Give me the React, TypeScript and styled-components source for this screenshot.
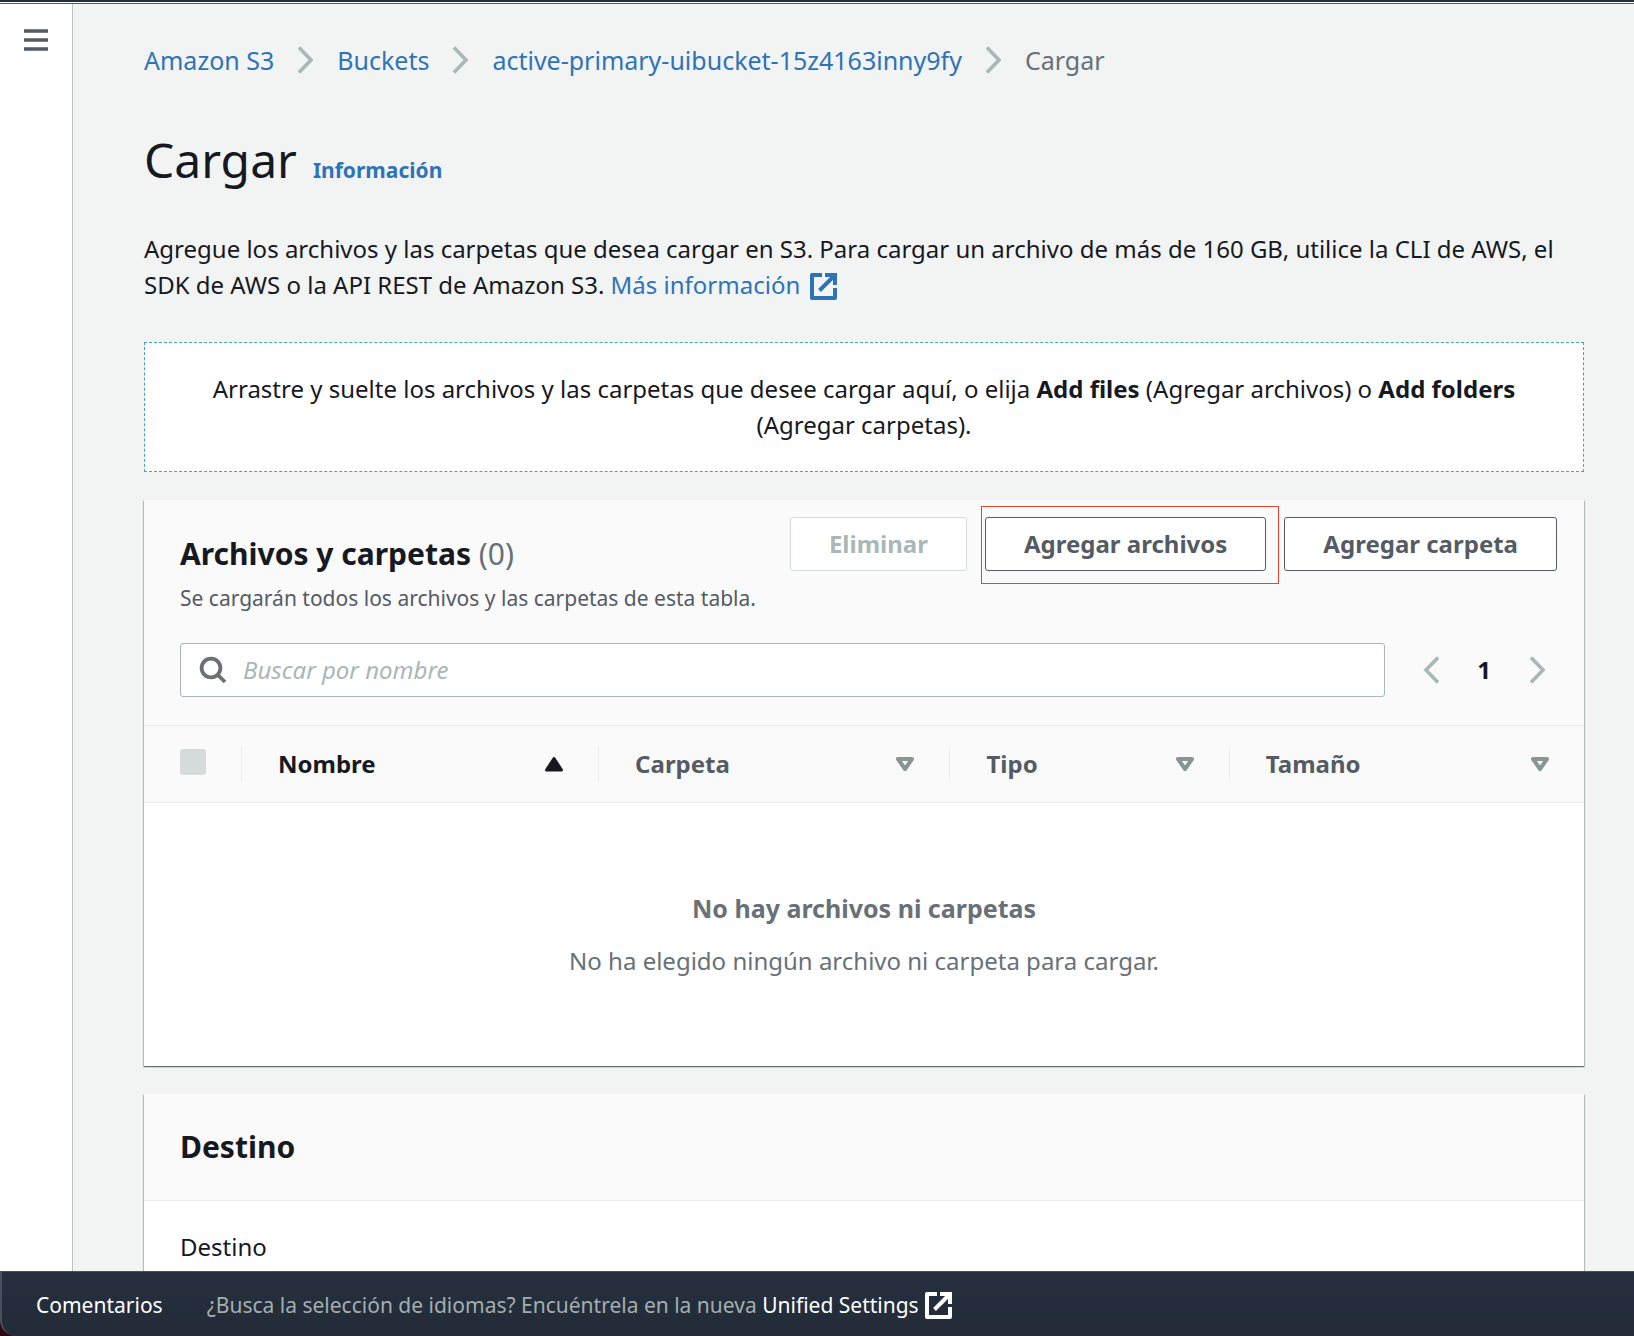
import React, { useState } from "react";
import styled, { createGlobalStyle, css } from "styled-components";

const color = {
  ink: "#16191f",
  slate: "#545b64",
  grey: "#687078",
  muted: "#aab7b8",
  sortIdle: "#879596",
  line: "#eaeded",
  link: "#2e73b8",
  page: "#f2f3f3",
  header: "#fafafa",
  navy: "#232f3e",
  alert: "#e8432e",
};

const GlobalStyle = createGlobalStyle`
  *, *::before, *::after { box-sizing: border-box; }
  body {
    margin: 0;
    background: ${color.page};
    color: ${color.ink};
    font-family: "Noto Sans", "Open Sans", sans-serif;
    font-size: 24px;
    line-height: 36px;
  }
  h1, h2, p, ol { margin: 0; padding: 0; }
  button, input { font: inherit; color: inherit; }
`;

const Shell = styled.div`
  display: flex;
  flex-direction: column;
  height: 100vh;
  background: #2a0a10;
`;

const TopEdge = styled.div`
  flex: none;
  height: 4px;
  background: linear-gradient(${color.navy} 0 2px, #ffffff 2px 3px, ${color.slate} 3px 4px);
`;

const Body = styled.div`
  display: flex;
  flex: 1;
  min-height: 0;
  background: ${color.page};
`;

const SideRail = styled.nav`
  flex: none;
  width: 73px;
  padding: 16px 16px;
  background: #ffffff;
  border-right: 1px solid #b9c2c4;
`;

const IconButton = styled.button`
  display: flex;
  align-items: center;
  justify-content: center;
  width: 40px;
  height: 40px;
  padding: 0;
  border: 0;
  background: none;
  color: ${color.slate};
  &:disabled { color: ${color.muted}; }
`;

const Main = styled.main`
  flex: 1;
  min-width: 0;
  padding: 38px 50px 0 71px;
  overflow-y: auto;
  scrollbar-width: none;
`;

const Crumbs = styled.ol`
  display: flex;
  flex-wrap: wrap;
  list-style: none;
  font-size: 25px;
`;

const Crumb = styled.li`
  display: flex;
  align-items: center;
  color: ${color.grey};
  & > svg { margin: 0 23px; color: ${color.muted}; }
`;

const Link = styled.a`
  color: ${color.link};
  text-decoration: none;
`;

const TitleRow = styled.div`
  display: flex;
  align-items: baseline;
  gap: 16px;
  margin-top: 48px;
`;

const Title = styled.h1`
  font-size: 48px;
  line-height: 68px;
  font-weight: 400;
`;

const InfoLink = styled(Link)`
  font-size: 21px;
  font-weight: 700;
`;

const Intro = styled.p`
  margin-top: 37px !important;
  & svg { margin-left: 10px; vertical-align: -6px; }
`;

const DropZone = styled.p`
  margin-top: 39px !important;
  padding: 28px 48px !important;
  background: #ffffff;
  border: 1px dashed #3ea3c4;
  text-align: center;
`;

const Card = styled.section`
  margin-top: 28px;
  background: #ffffff;
  box-shadow: 0 1px 1px 0 rgba(0, 28, 36, 0.4), 1px 1px 1px 0 rgba(0, 28, 36, 0.2),
    -1px 1px 1px 0 rgba(0, 28, 36, 0.2);
`;

const CardHeader = styled.header`
  padding: 17px 27px 28px 36px;
  background: ${color.header};
  border-bottom: 1px solid ${color.line};
`;

const HeaderTop = styled.div`
  display: flex;
  justify-content: space-between;
`;

const HeaderText = styled.div`
  padding-top: 17px;
`;

const CardTitle = styled.h2`
  font-size: 30px;
  line-height: 40px;
  font-weight: 700;
`;

const Count = styled.span`
  color: ${color.grey};
  font-weight: 400;
`;

const Description = styled.p`
  margin-top: 8px !important;
  font-size: 21px;
  line-height: 32px;
  color: ${color.slate};
`;

const Actions = styled.div`
  display: flex;
  align-items: flex-start;
  gap: 18px;
`;

const Button = styled.button`
  height: 54px;
  padding: 0 38px;
  background: #ffffff;
  border: 1px solid ${color.slate};
  border-radius: 3px;
  color: ${color.slate};
  font-weight: 700;
  white-space: nowrap;
  &:disabled {
    border-color: #d5dbdb;
    color: ${color.muted};
  }
`;

const Highlight = styled.span`
  position: relative;
  display: flex;
  &::after {
    content: "";
    position: absolute;
    inset: -11px -13px -13px -4px;
    border: 1px solid ${color.alert};
    pointer-events: none;
  }
`;

const Tools = styled.div`
  display: flex;
  align-items: center;
  gap: 26px;
  margin-top: 29px;
`;

const SearchBox = styled.label`
  display: flex;
  flex: 1;
  align-items: center;
  gap: 16px;
  height: 54px;
  padding: 0 18px;
  background: #ffffff;
  border: 1px solid ${color.muted};
  border-radius: 3px;
  color: ${color.grey};
  & > svg { flex: none; }
`;

const SearchInput = styled.input`
  flex: 1;
  min-width: 0;
  padding: 0;
  border: 0;
  outline: 0;
  background: none;
  color: ${color.ink};
  &::placeholder { color: ${color.muted}; font-style: italic; opacity: 1; }
`;

const Pager = styled.nav`
  display: flex;
  align-items: center;
  gap: 14px;
`;

const PageNumber = styled.button`
  width: 38px;
  padding: 0;
  border: 0;
  background: none;
  color: ${color.ink};
  font-weight: 700;
`;

const Table = styled.table`
  width: 100%;
  border-collapse: collapse;
  table-layout: fixed;
`;

const HeadCell = styled.th<{ $width?: string }>`
  width: ${(p) => p.$width ?? "auto"};
  height: 76px;
  padding: 0;
  background: ${color.header};
  border-bottom: 1px solid ${color.line};
  text-align: left;
`;

const HeadInner = styled.div<{ $divider?: boolean }>`
  display: flex;
  align-items: center;
  height: 38px;
  padding: 0 34px 0 36px;
  ${(p) => p.$divider && css`border-right: 1px solid ${color.line};`}
`;

const SortButton = styled.button<{ $active: boolean }>`
  display: flex;
  flex: 1;
  align-items: center;
  justify-content: space-between;
  padding: 0;
  border: 0;
  background: none;
  color: ${(p) => (p.$active ? color.ink : color.slate)};
  font-weight: 700;
  & > svg { flex: none; color: ${(p) => (p.$active ? color.ink : color.sortIdle)}; }
`;

const Check = styled.input`
  appearance: none;
  flex: none;
  width: 26px;
  height: 26px;
  margin: 0 0 4px;
  background: #d5dbdb;
  border-radius: 3px;
`;

const EmptyCell = styled.td`
  height: 264px;
  padding: 0;
  color: ${color.grey};
  text-align: center;
`;

const EmptyTitle = styled.p`
  margin-bottom: 17px !important;
  font-size: 25px;
  font-weight: 700;
`;

const PlainHeader = styled(CardHeader)`
  padding: 33px 36px;
`;

const CardBody = styled.div`
  padding: 28px 36px 60px;
`;

const Footer = styled.footer`
  display: flex;
  flex: none;
  align-items: center;
  gap: 44px;
  height: 65px;
  padding: 2px 34px 0;
  background: linear-gradient(#262f40, #222b36);
  border-top: 1px solid #4a515e;
  border-left: 2px solid #4a515e;
  border-bottom-left-radius: 16px;
  color: #a3aeae;
  font-size: 21px;
`;

const FooterLink = styled.a`
  color: #ffffff;
  text-decoration: none;
  & > svg { margin-left: 6px; vertical-align: -6px; }
`;

const MenuIcon = () => (
  <svg width="24" height="24" viewBox="0 0 24 24" stroke="currentColor" strokeWidth="3.600" aria-hidden="true">
    <path d="M0 3h24M0 12h24M0 21h24" />
  </svg>
);

const Chevron = ({ left = false }: { left?: boolean }) => (
  <svg width="17" height="28" viewBox="0 0 17 28" fill="none" stroke="currentColor" strokeWidth="3.600" aria-hidden="true">
    <path d={left ? "M15 1.500 3 14l12 12.500" : "M2 1.500 14 14 2 26.500"} />
  </svg>
);

const ExternalIcon = () => (
  <svg width="27" height="27" viewBox="0 0 27 27" fill="none" stroke="currentColor" strokeWidth="4" aria-hidden="true">
    <path d="M12 2H2v23h23V15" strokeLinejoin="round" />
    <path d="M15 2h10v10M25 2 9.500 17.500" />
  </svg>
);

const SearchIcon = () => (
  <svg width="28" height="28" viewBox="0 0 28 28" fill="none" stroke="currentColor" strokeWidth="3.800" aria-hidden="true">
    <circle cx="12" cy="12" r="9.400" />
    <path d="m18.500 18.500 7.500 7.500" />
  </svg>
);

const SortIcon = ({ active }: { active: boolean }) => (
  <svg width="20" height="16" viewBox="0 0 20 16" stroke="currentColor" strokeLinejoin="round" aria-hidden="true">
    {active ? (
      <path d="M10 2.500 17.500 14h-15z" fill="currentColor" strokeWidth="3" />
    ) : (
      <path d="M3 3h14l-7 10z" fill="none" strokeWidth="4" />
    )}
  </svg>
);

const trail = ["Amazon S3", "Buckets", "active-primary-uibucket-15z4163inny9fy"];

const columns = [
  { name: "Nombre", width: "24.800%" },
  { name: "Carpeta", width: "24.400%" },
  { name: "Tipo", width: "19.400%" },
  { name: "Tamaño", width: undefined },
];

export default function App() {
  const [sorted, setSorted] = useState("Nombre");
  const [query, setQuery] = useState("");

  return (
    <>
      <GlobalStyle />
      <Shell>
        <TopEdge />
        <Body>
          <SideRail>
            <IconButton aria-label="Abrir navegación"><MenuIcon /></IconButton>
          </SideRail>
          <Main>
            <nav aria-label="Ruta">
              <Crumbs>
                {trail.map((item) => (
                  <Crumb key={item}><Link href="#">{item}</Link><Chevron /></Crumb>
                ))}
                <Crumb aria-current="page">Cargar</Crumb>
              </Crumbs>
            </nav>

            <TitleRow>
              <Title>Cargar</Title>
              <InfoLink href="#">Información</InfoLink>
            </TitleRow>

            <Intro>
              Agregue los archivos y las carpetas que desea cargar en S3. Para cargar un archivo de más de 160 GB,
              utilice la CLI de AWS, el SDK de AWS o la API REST de Amazon S3.{" "}
              <Link href="#">Más información<ExternalIcon /></Link>
            </Intro>

            <DropZone>
              Arrastre y suelte los archivos y las carpetas que desee cargar aquí, o elija <b>Add files</b> (Agregar
              archivos) o <b>Add folders</b> (Agregar carpetas).
            </DropZone>

            <Card>
              <CardHeader>
                <HeaderTop>
                  <HeaderText>
                    <CardTitle>Archivos y carpetas <Count>(0)</Count></CardTitle>
                    <Description>Se cargarán todos los archivos y las carpetas de esta tabla.</Description>
                  </HeaderText>
                  <Actions>
                    <Button disabled>Eliminar</Button>
                    <Highlight><Button>Agregar archivos</Button></Highlight>
                    <Button>Agregar carpeta</Button>
                  </Actions>
                </HeaderTop>
                <Tools>
                  <SearchBox>
                    <SearchIcon />
                    <SearchInput
                      type="text"
                      aria-label="Buscar por nombre"
                      placeholder="Buscar por nombre"
                      value={query}
                      onChange={(e) => setQuery(e.target.value)}
                    />
                  </SearchBox>
                  <Pager aria-label="Paginación">
                    <IconButton disabled aria-label="Página anterior"><Chevron left /></IconButton>
                    <PageNumber aria-current="page">1</PageNumber>
                    <IconButton disabled aria-label="Página siguiente"><Chevron /></IconButton>
                  </Pager>
                </Tools>
              </CardHeader>
              <Table>
                <thead>
                  <tr>
                    <HeadCell $width="98px">
                      <HeadInner $divider>
                        <Check type="checkbox" disabled aria-label="Seleccionar todo" />
                      </HeadInner>
                    </HeadCell>
                    {columns.map((col, i) => (
                      <HeadCell key={col.name} $width={col.width} scope="col">
                        <HeadInner $divider={i < columns.length - 1}>
                          <SortButton $active={sorted === col.name} onClick={() => setSorted(col.name)}>
                            {col.name}
                            <SortIcon active={sorted === col.name} />
                          </SortButton>
                        </HeadInner>
                      </HeadCell>
                    ))}
                  </tr>
                </thead>
                <tbody>
                  <tr>
                    <EmptyCell colSpan={5}>
                      <EmptyTitle>No hay archivos ni carpetas</EmptyTitle>
                      <p>No ha elegido ningún archivo ni carpeta para cargar.</p>
                    </EmptyCell>
                  </tr>
                </tbody>
              </Table>
            </Card>

            <Card>
              <PlainHeader><CardTitle>Destino</CardTitle></PlainHeader>
              <CardBody>Destino</CardBody>
            </Card>
          </Main>
        </Body>
        <Footer>
          <FooterLink href="#">Comentarios</FooterLink>
          <span>
            ¿Busca la selección de idiomas? Encuéntrela en la nueva{" "}
            <FooterLink href="#">Unified Settings<ExternalIcon /></FooterLink>
          </span>
        </Footer>
      </Shell>
    </>
  );
}
